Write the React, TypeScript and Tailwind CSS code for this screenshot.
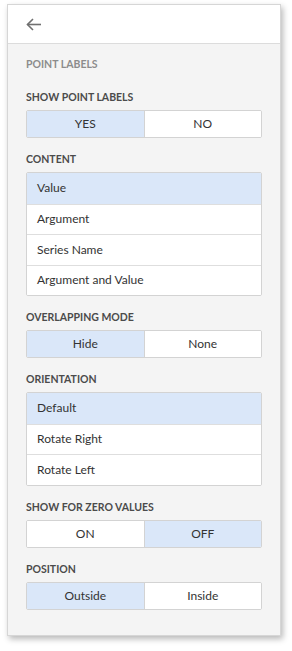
import React, { useState } from 'react';

const font = { fontFamily: 'Lato, "Open Sans", sans-serif' };

function Label({ children }: { children: React.ReactNode }) {
  return (
    <div className="h-4 leading-4 mb-[5px] text-[10.5px] font-bold text-[#4b4b4b]">
      {children}
    </div>
  );
}

function Toggle({ options, value, onChange }: { options: string[]; value: string; onChange: (v: string) => void }) {
  return (
    <div className="flex h-7 border border-[#d3d3d3] rounded-[2px] overflow-hidden bg-white">
      {options.map((o, i) => (
        <button
          key={o}
          onClick={() => onChange(o)}
          className={`flex-1 text-[12px] text-[#333] ${i > 0 ? 'border-l border-[#d3d3d3]' : ''} ${
            value === o ? 'bg-[#dae7f9]' : 'bg-white'
          }`}
        >
          {o}
        </button>
      ))}
    </div>
  );
}

function List({ options, value, onChange }: { options: string[]; value: string; onChange: (v: string) => void }) {
  return (
    <div className="border border-[#d3d3d3] rounded-[2px] overflow-hidden bg-white">
      {options.map((o, i) => (
        <div
          key={o}
          onClick={() => onChange(o)}
          className={`h-[30.5px] flex items-center pl-[10px] text-[12px] text-[#333] ${
            i > 0 ? 'border-t border-[#dedede]' : ''
          } ${value === o ? 'bg-[#dae7f9]' : 'bg-white'}`}
        >
          {o}
        </div>
      ))}
    </div>
  );
}

export default function App() {
  const [showLabels, setShowLabels] = useState('YES');
  const [content, setContent] = useState('Value');
  const [overlap, setOverlap] = useState('Hide');
  const [orientation, setOrientation] = useState('Default');
  const [zero, setZero] = useState('OFF');
  const [position, setPosition] = useState('Outside');

  return (
    <div className="w-[292px] h-[651px] bg-white pt-[4px] pl-[7px]" style={font}>
      <div className="w-[274px] h-[632px] bg-[#f4f4f4] border border-[#d6d6d6] shadow-[2px_3px_6px_rgba(0,0,0,0.28)] flex flex-col">
        <div className="h-[39px] bg-white border-b border-[#dcdcdc] flex items-center pl-[18px]">
          <svg width="16" height="13" viewBox="0 0 16 13" fill="none" stroke="#707070" strokeWidth="1.6">
            <path d="M15 6.5H1.5" />
            <path d="M7 1 1.5 6.5 7 12" />
          </svg>
        </div>
        <div className="px-[18px] pt-[12px] flex flex-col">
          <div className="h-4 leading-4 mb-[17px] text-[10.5px] font-bold text-[#8c8c8c]">POINT LABELS</div>
          <div className="flex flex-col gap-[13px]">
            <div>
              <Label>SHOW POINT LABELS</Label>
              <Toggle options={['YES', 'NO']} value={showLabels} onChange={setShowLabels} />
            </div>
            <div>
              <Label>CONTENT</Label>
              <List
                options={['Value', 'Argument', 'Series Name', 'Argument and Value']}
                value={content}
                onChange={setContent}
              />
            </div>
            <div>
              <Label>OVERLAPPING MODE</Label>
              <Toggle options={['Hide', 'None']} value={overlap} onChange={setOverlap} />
            </div>
            <div>
              <Label>ORIENTATION</Label>
              <List options={['Default', 'Rotate Right', 'Rotate Left']} value={orientation} onChange={setOrientation} />
            </div>
            <div>
              <Label>SHOW FOR ZERO VALUES</Label>
              <Toggle options={['ON', 'OFF']} value={zero} onChange={setZero} />
            </div>
            <div>
              <Label>POSITION</Label>
              <Toggle options={['Outside', 'Inside']} value={position} onChange={setPosition} />
            </div>
          </div>
        </div>
      </div>
    </div>
  );
}
